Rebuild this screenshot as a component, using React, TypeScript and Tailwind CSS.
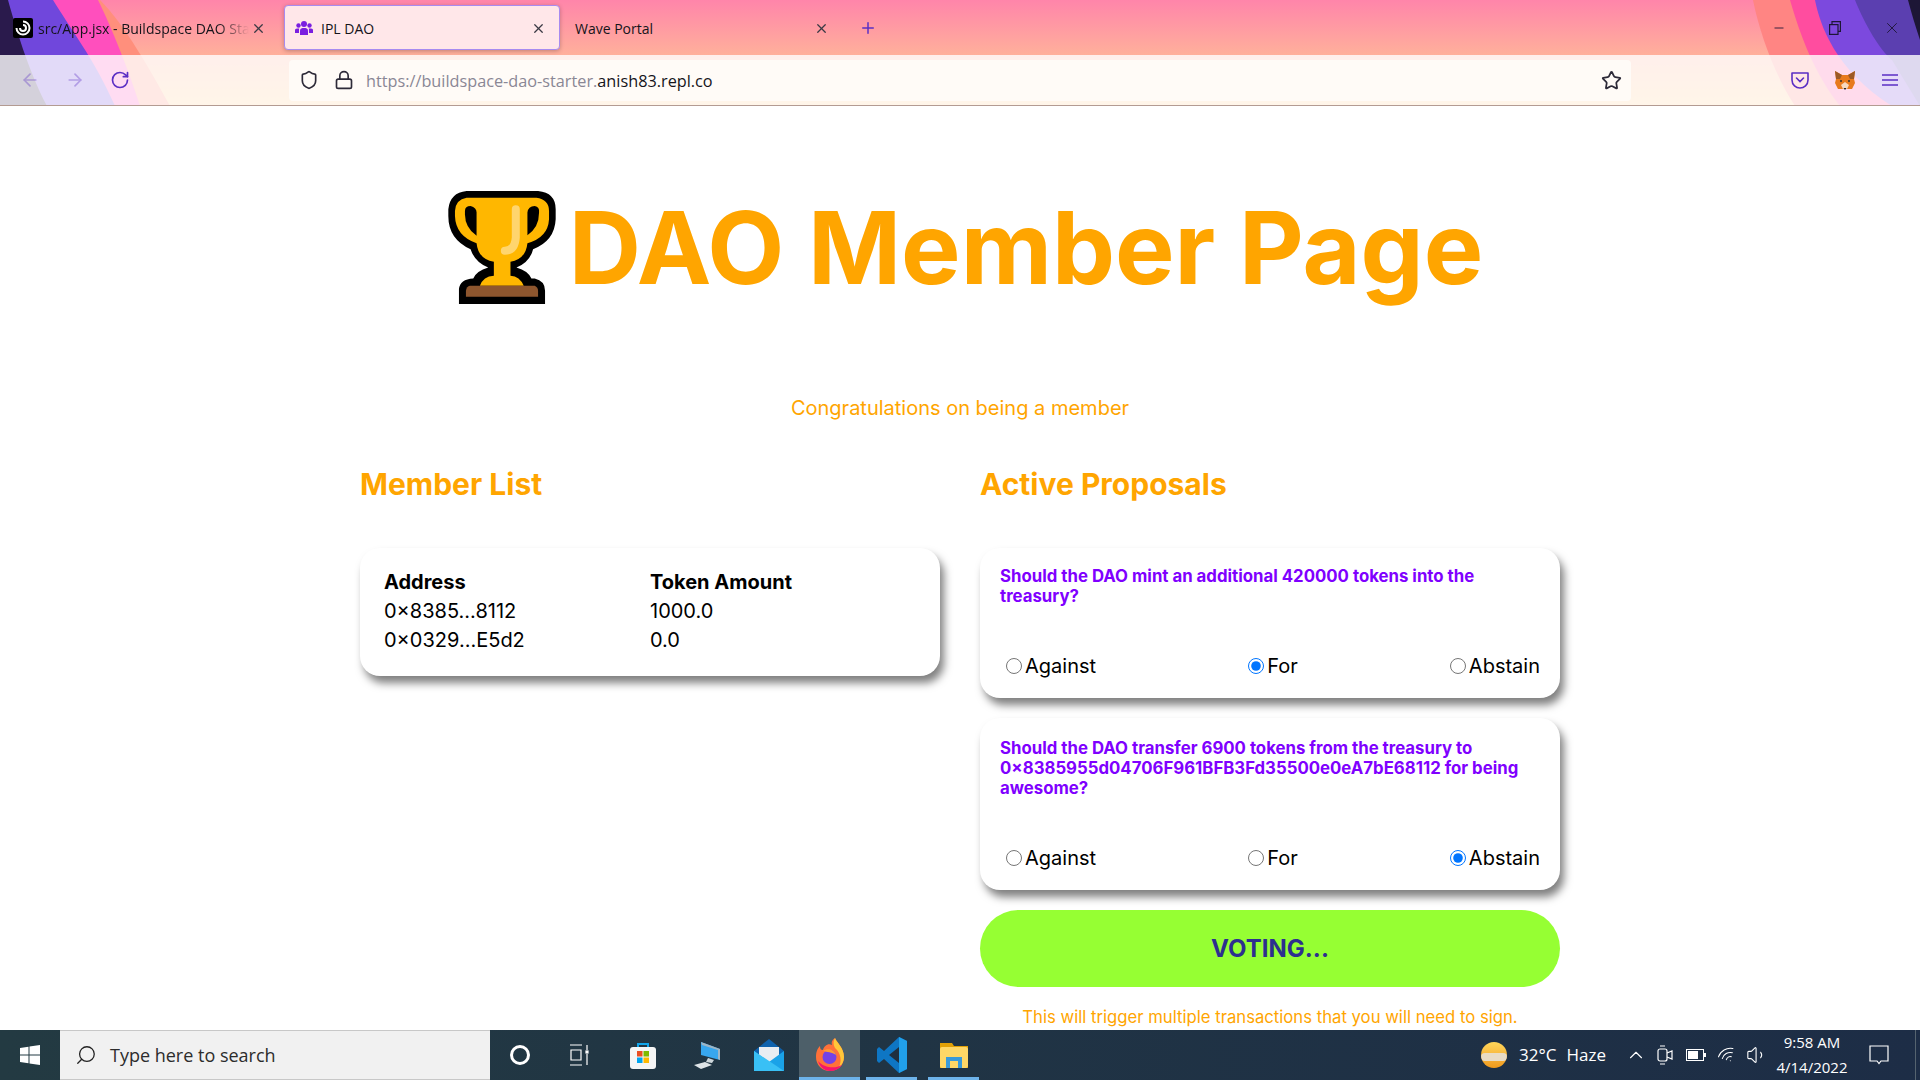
import { ArrowLeft, ArrowRight, RotateCw, Star, Plus, X, Minus, Lock, Shield, Search, ChevronUp, Wifi, Volume1 } from "lucide-react";

function ThemeArt() {
  return (
    <svg className="absolute inset-0 w-full h-full" viewBox="0 0 1920 106" preserveAspectRatio="none">
      <defs>
        <linearGradient id="bg" x1="0" y1="0" x2="0" y2="1">
          <stop offset="0" stopColor="#ff85aa" />
          <stop offset="0.52" stopColor="#ffb09b" />
          <stop offset="1" stopColor="#ffd08f" />
        </linearGradient>
      </defs>
      <rect width="1920" height="106" fill="url(#bg)" />
      <path d="M0 0H100C125 25 150 70 170 106H0Z" fill="#ff8f7c" />
      <path d="M0 0H98C108 20 125 60 140 106H0Z" fill="#ff4fbd" />
      <path d="M0 0H53C68 25 95 60 115 106H0Z" fill="#7047dc" />
      <path d="M0 0H8C15 25 28 70 47 106H0Z" fill="#2a1a4c" />
      <path d="M1920 0H1753C1760 35 1775 75 1795 106H1920Z" fill="#ff8583" />
      <path d="M1920 0H1790C1800 35 1815 75 1840 106H1920Z" fill="#ff4d9f" />
      <path d="M1920 0H1815C1820 25 1835 70 1892 106H1920Z" fill="#7c49de" />
      <path d="M1920 0H1855C1865 25 1880 50 1892 60L1920 106Z" fill="#5b3fb0" />
      <path d="M1920 0H1908C1912 15 1916 28 1920 40Z" fill="#1d1636" />
    </svg>
  );
}

function BrowserTabs() {
  return (
    <div className="relative flex h-[55px] items-center text-[14px] text-[#15141a] font-['Open_Sans',sans-serif]">
      <div className="flex h-[44px] w-[284px] items-center pl-[13px] pt-[1px]">
        <span className="flex h-[20px] w-[20px] shrink-0 items-center justify-center rounded-[2px] bg-black">
          <svg width="16" height="16" viewBox="0 0 16 16" fill="none" stroke="#fff" strokeWidth="2">
            <path d="M8 1.5A6.5 6.5 0 1 1 1.5 8" />
            <path d="M8 5A3 3 0 1 1 5 8" />
          </svg>
        </span>
        <span className="ml-[5px] w-[211px] overflow-hidden whitespace-nowrap [mask-image:linear-gradient(to_right,black_85%,transparent)]">src/App.jsx - Buildspace DAO Starter</span>
        <X className="ml-[2px] h-[15px] w-[15px] text-[#3a3944]" />
      </div>
      <div className="flex h-[45px] w-[276px] items-center rounded-[4px] border border-[#a78bf0] bg-[#ffe7e9] pl-[10px] pr-[13px] pt-[1px] shadow-[0_1px_4px_rgba(0,0,0,0.25)]">
        <svg width="18" height="16" viewBox="0 0 18 16" fill="#7a1fe0">
          <circle cx="9" cy="4" r="3" />
          <circle cx="3.5" cy="5.5" r="2.2" />
          <circle cx="14.5" cy="5.5" r="2.2" />
          <path d="M5 15V10.5C5 8.5 7 8 9 8C11 8 13 8.5 13 10.5V15Z" />
          <path d="M0 13V10C0 8.8 1.5 8.5 3.5 8.5C4 8.5 4.2 8.6 4.2 8.6C4 9.2 4 10 4 13Z" />
          <path d="M18 13V10C18 8.8 16.5 8.5 14.5 8.5C14 8.5 13.8 8.6 13.8 8.6C14 9.2 14 10 14 13Z" />
        </svg>
        <span className="ml-[8px] flex-1">IPL DAO</span>
        <X className="h-[15px] w-[15px] text-[#3a3944]" />
      </div>
      <div className="flex h-[44px] w-[274px] items-center pl-[15px] pr-[5px] pt-[1px]">
        <span className="flex-1">Wave Portal</span>
        <X className="h-[15px] w-[15px] text-[#3a3944]" />
      </div>
      <Plus className="ml-[25px] h-[18px] w-[18px] text-[#5b2fc4]" />
      <div className="ml-auto flex h-full items-center text-[#1d1636]">
        <span className="flex w-[56px] justify-center"><Minus className="h-[14px] w-[14px]" strokeWidth={1.5} /></span>
        <span className="flex w-[56px] justify-center">
          <svg width="12" height="14" viewBox="0 0 12 14" fill="none" stroke="currentColor" strokeWidth="1.2">
            <rect x="0.6" y="3.6" width="8.4" height="9.8" />
            <path d="M3 3.6V0.6H11.4V10.4H9" />
          </svg>
        </span>
        <span className="flex w-[57px] justify-center"><X className="h-[18px] w-[18px]" strokeWidth={1.2} /></span>
      </div>
    </div>
  );
}

function FoxIcon() {
  return (
    <svg width="22" height="21" viewBox="0 0 22 21">
      <path d="M1 1L8 5H14L21 1L20 9L21 13L18 19H4L1 13L2 9Z" fill="#e87a1c" />
      <path d="M1 1L8 5L6 9L2 9Z M21 1L14 5L16 9L20 9Z" fill="#9c5a26" />
      <path d="M7 15L11 12L15 15L13 19H9Z" fill="#f6d9c0" />
      <path d="M9.5 18H12.5L11 20Z" fill="#222" />
      <circle cx="7" cy="11" r="1" fill="#333" />
      <circle cx="15" cy="11" r="1" fill="#333" />
    </svg>
  );
}

function BrowserToolbar() {
  return (
    <div className="relative flex h-[51px] items-center border-b border-[#b39b92] bg-white/80 font-['Open_Sans',sans-serif]">
      <div className="flex w-[289px] items-center pl-[20px] text-[#5b2fc4]">
        <ArrowLeft className="h-[20px] w-[20px] opacity-35" />
        <ArrowRight className="ml-[25px] h-[20px] w-[20px] opacity-35" />
        <RotateCw className="ml-[25px] h-[20px] w-[20px]" />
      </div>
      <div className="flex h-[41px] w-[1342px] items-center rounded-[4px] bg-[#fffbf7] pl-[10px] pr-[9px]">
        <Shield className="h-[20px] w-[20px] text-[#2d2a38]" />
        <Lock className="ml-[15px] h-[20px] w-[20px] text-[#2d2a38]" />
        <span className="ml-[12px] pt-[2px] text-[16.25px] text-[#8a8795]">
          https://buildspace-dao-starter.<span className="text-[#15141a]">anish83.repl.co</span>
        </span>
        <Star className="ml-auto h-[21px] w-[21px] text-[#2d2a38]" />
      </div>
      <div className="ml-auto flex items-center pr-[22px] text-[#5b2fc4]">
        <svg width="20" height="20" viewBox="0 0 20 20" fill="none" stroke="currentColor" strokeWidth="1.6">
          <path d="M2 3H18V10C18 15 14 18 10 18C6 18 2 15 2 10Z" strokeLinejoin="round" />
          <path d="M6.5 8L10 11.5L13.5 8" strokeLinecap="round" />
        </svg>
        <span className="ml-[24px]"><FoxIcon /></span>
        <svg className="ml-[26px]" width="16" height="14" viewBox="0 0 16 14" stroke="currentColor" strokeWidth="1.6">
          <path d="M0 2H16M0 7H16M0 12H16" />
        </svg>
      </div>
    </div>
  );
}

function Trophy() {
  return (
    <svg className="shrink-0" width="108" height="113" viewBox="85 65 323 340">
      <path d="M140 65H355Q408 70 408 120V150Q405 215 340 240Q330 280 290 295Q325 305 335 328H345Q376 335 376 365V405H117V360Q120 330 160 328Q170 305 205 295Q165 280 152 240Q85 210 85 140V120Q90 70 140 65Z" fill="#000" />
      <path d="M140 85H350Q388 90 388 125V150Q385 205 323 222Q318 270 272 278V320Q300 322 312 350H180Q190 322 222 320V278Q175 270 170 222Q107 200 105 140V125Q107 90 140 85Z" fill="#ffb700" />
      <path d="M135 125Q135 110 152 110Q170 115 170 130V200Q135 175 135 135Z" fill="#000" />
      <path d="M323 130Q325 110 345 110Q360 112 358 130Q358 175 323 198Z" fill="#000" />
      <path d="M288 120V205Q285 245 255 245" fill="none" stroke="#ffd56e" strokeWidth="24" strokeLinecap="round" />
      <path d="M150 350H345Q355 355 355 365V383H138V365Q140 352 150 350Z" fill="#8e562e" />
    </svg>
  );
}

function VoteRow({ picked }: { picked: string }) {
  return (
    <div className="flex items-center justify-between pl-[23px] pr-[20px] text-[20px] text-black">
      {["Against", "For", "Abstain"].map((option) => (
        <label key={option} className="flex items-center">
          <input type="radio" readOnly checked={picked === option} className="m-[3px] h-[16px] w-[16px]" />
          <span>{option}</span>
        </label>
      ))}
    </div>
  );
}

const cardClass = "rounded-[20px] bg-white shadow-[4px_7px_8px_rgba(0,0,0,0.5)]";

function MemberPage() {
  return (
    <main className="h-[924px] overflow-hidden bg-white font-['Inter',sans-serif]">
      <h1 className="mt-[85px] flex items-center justify-center pl-[11px] text-[100px] font-bold leading-[113px] text-[#ffa500]">
        <Trophy />
        <span className="ml-[13px]">DAO Member Page</span>
      </h1>
      <p className="mt-[92px] text-center text-[20px] leading-[24px] text-[#ffa500]">Congratulations on being a member</p>
      <div className="mx-auto mt-[44px] grid w-[1200px] grid-cols-2 gap-x-[40px]">
        <div>
          <h2 className="text-[30px] font-bold leading-[40px] text-[#ffa500]">Member List</h2>
          <div className={`mt-[44px] h-[128px] px-[24px] pt-[19px] text-[20px] leading-[24px] text-black ${cardClass}`}>
            <table className="w-full table-fixed">
              <tbody>
                <tr className="h-[29px] font-bold"><td className="w-[266px]">Address</td><td>Token Amount</td></tr>
                <tr className="h-[29px]"><td>0×8385...8112</td><td>1000.0</td></tr>
                <tr className="h-[29px]"><td>0×0329...E5d2</td><td>0.0</td></tr>
              </tbody>
            </table>
          </div>
        </div>
        <div>
          <h2 className="text-[30px] font-bold leading-[40px] text-[#ffa500]">Active Proposals</h2>
          <div className={`mt-[44px] h-[150px] ${cardClass}`}>
            <p className="h-[103px] px-[20px] pt-[18px] text-[16.8px] font-bold leading-[20px] text-[#7f00ff]">
              Should the DAO mint an additional 420000 tokens into the treasury?
            </p>
            <VoteRow picked="For" />
          </div>
          <div className={`mt-[20px] h-[172px] ${cardClass}`}>
            <p className="h-[125px] px-[20px] pt-[20px] text-[16.8px] font-bold leading-[20px] text-[#7f00ff]">
              Should the DAO transfer 6900 tokens from the treasury to 0×8385955d04706F961BFB3Fd35500e0eA7bE68112 for being awesome?
            </p>
            <VoteRow picked="Abstain" />
          </div>
          <button className="mt-[20px] flex h-[77px] w-full items-center justify-center rounded-full bg-[#96ff33] text-[24px] font-bold text-[#2d2f8f]">
            VOTING...
          </button>
          <p className="mt-[20px] text-center text-[16.7px] leading-[20px] text-[#ffa500]">
            This will trigger multiple transactions that you will need to sign.
          </p>
        </div>
      </div>
    </main>
  );
}

function TaskSlot({ className, active, children }: { className: string; active?: boolean; children: React.ReactNode }) {
  return (
    <div className={`relative flex h-full items-center justify-center ${active ? "bg-[#4d5f69]" : ""} ${className}`}>
      {children}
    </div>
  );
}

function Underlined() {
  return <span className="absolute inset-x-0 bottom-0 h-[3px] bg-[#6db3ea]" />;
}

function Taskbar() {
  return (
    <footer className="flex h-[50px] items-center bg-gradient-to-r from-[#233a42] to-[#1d2d46] text-white font-['Open_Sans',sans-serif]">
      <div className="flex h-full w-[60px] items-center justify-center">
        <svg width="20" height="20" viewBox="0 0 20 20" fill="#fff">
          <path d="M0 3L8.5 1.8V9.4H0ZM9.5 1.6L20 0V9.4H9.5ZM0 10.4H8.5V18.2L0 17ZM9.5 10.4H20V20L9.5 18.4Z" />
        </svg>
      </div>
      <div className="flex h-full w-[430px] items-center border-y border-[#c8c8c8] bg-[#f1f1f1] pl-[15px] text-[18px] text-[#2c2c2c]">
        <Search className="h-[22px] w-[22px] -scale-x-100 text-[#222]" strokeWidth={1.4} />
        <span className="ml-[13px]">Type here to search</span>
      </div>
      <TaskSlot className="w-[60px]">
        <span className="h-[20px] w-[20px] rounded-full border-[3px] border-white" />
      </TaskSlot>
      <TaskSlot className="w-[60px]">
        <svg width="22" height="22" viewBox="0 0 22 22" fill="none" stroke="#fff" strokeWidth="1.2">
          <path d="M1 1H13M1 21H13M2 6H12V16H2ZM18 1V6M18 10V21" />
          <rect x="17" y="7" width="2" height="2" fill="#fff" />
        </svg>
      </TaskSlot>
      <TaskSlot className="w-[66px]">
        <svg width="30" height="30" viewBox="0 0 30 30">
          <path d="M10 8V4H20V8" fill="none" stroke="#12a5ea" strokeWidth="2" />
          <rect x="2" y="7" width="26" height="22" rx="3" fill="#f5f5f5" />
          <rect x="9" y="11" width="5.5" height="5.5" fill="#ea4f23" />
          <rect x="15.5" y="11" width="5.5" height="5.5" fill="#7fba00" />
          <rect x="9" y="17.5" width="5.5" height="5.5" fill="#00a4ef" />
          <rect x="15.5" y="17.5" width="5.5" height="5.5" fill="#ffb900" />
        </svg>
      </TaskSlot>
      <TaskSlot className="w-[62px]">
        <svg width="30" height="32" viewBox="0 0 30 32">
          <path d="M9 3L28 10V21L9 16Z" fill="#37a7ef" />
          <path d="M9 3L28 10L28 21L26 20V11L10 6Z" fill="#9fb5c4" />
          <path d="M16 19L22 21L20 24L14 23Z" fill="#cfd8dc" />
          <path d="M2 26L13 23L20 26L9 30Z" fill="#dfe5e8" />
        </svg>
      </TaskSlot>
      <TaskSlot className="w-[61px]">
        <svg width="30" height="34" viewBox="0 0 30 34">
          <path d="M0 13L15 1L30 13V33H0Z" fill="#0e62ad" />
          <path d="M5 9H25V20L15 25L5 20Z" fill="#e8edf2" />
          <path d="M0 13L15 24L30 13V33H0Z" fill="#1aa2e8" />
          <path d="M0 13L30 33H0Z" fill="#39c0f5" />
        </svg>
      </TaskSlot>
      <TaskSlot className="w-[61px]" active>
        <svg width="30" height="36" viewBox="0 0 30 36">
          <path d="M20 1C22 6 29 11 29 20C29 29 22 34 15 34C7 34 1 28 1 20C1 14 3 11 5 9C5 12 6 13 8 13C9 9 13 6 17 8C16 5 17 3 20 1Z" fill="#ff7139" />
          <path d="M20 1C22 6 29 11 29 20C29 24 27 28 24 30C27 24 26 16 20 11C18 8 18 4 20 1Z" fill="#ffc73a" />
          <path d="M3 24C5 31 11 34 15 34C20 34 24 32 27 28C20 32 9 31 3 24Z" fill="#f5156c" />
          <circle cx="14.5" cy="20" r="7" fill="#7542e5" />
          <path d="M8 14C12 11 19 12 21 18C17 15 12 15 8 14Z" fill="#ff9b32" />
        </svg>
        <Underlined />
      </TaskSlot>
      <TaskSlot className="ml-[6px] w-[51px]">
        <svg width="30" height="36" viewBox="0 0 30 36">
          <path d="M22 0L30 4V32L22 36L7 22L2 26L0 24V12L2 10L7 14Z" fill="#0e76c4" />
          <path d="M22 0L30 4V32L22 36Z" fill="#21a0ea" />
          <path d="M22 10L12 18L22 26Z" fill="#1f2f3f" />
        </svg>
        <Underlined />
      </TaskSlot>
      <TaskSlot className="ml-[11px] w-[51px]">
        <svg width="28" height="28" viewBox="0 0 28 28">
          <path d="M0 2H12L14 5H28V27H0Z" fill="#e1a006" />
          <rect y="6" width="28" height="21" rx="2" fill="#ffd766" />
          <path d="M6 27V16H22V27H18V20H10V27Z" fill="#3a9ad9" />
        </svg>
        <Underlined />
      </TaskSlot>
      <div className="ml-auto flex h-full items-center">
        <span className="relative h-[26px] w-[26px] overflow-hidden rounded-full bg-gradient-to-b from-[#ffd659] to-[#f09a1a]">
          <span className="absolute left-0 top-[11px] h-[8px] w-[26px] rounded-full bg-[#e9dcc5]" />
        </span>
        <span className="ml-[12px] text-[17px]">32°C</span>
        <span className="ml-[10px] text-[17px]">Haze</span>
        <ChevronUp className="ml-[19px] h-[22px] w-[22px]" strokeWidth={1.2} />
        <svg className="ml-[10px]" width="16" height="22" viewBox="0 0 16 22" fill="none" stroke="#fff" strokeWidth="1.2">
          <rect x="1" y="5" width="9" height="12" rx="2" />
          <path d="M10 9L15 7V15L10 13M3 2H8M3 20H8" />
        </svg>
        <svg className="ml-[13px]" width="20" height="12" viewBox="0 0 20 12">
          <rect x="0.5" y="0.5" width="17" height="11" fill="none" stroke="#fff" />
          <rect x="2" y="2" width="10" height="8" fill="#fff" />
          <rect x="18" y="4" width="2" height="4" fill="#fff" />
        </svg>
        <Wifi className="ml-[11px] h-[20px] w-[20px] rotate-[-30deg]" strokeWidth={1.2} />
        <Volume1 className="ml-[9px] h-[22px] w-[22px]" strokeWidth={1.2} />
        <div className="ml-[2px] w-[84px] text-center text-[15px] leading-[25px]">
          <div>9:58 AM</div>
          <div>4/14/2022</div>
        </div>
        <svg className="ml-[15px]" width="20" height="20" viewBox="0 0 20 20" fill="none" stroke="#fff" strokeWidth="1.2">
          <path d="M1 1H19V16H12L10 18.5L8 16H1Z" />
        </svg>
        <span className="ml-[26px] h-full w-[5px] border-l border-[#55636f]" />
      </div>
    </footer>
  );
}

export default function App() {
  return (
    <div className="h-[1080px] w-[1920px] overflow-hidden">
      <header className="relative">
        <ThemeArt />
        <BrowserTabs />
        <BrowserToolbar />
      </header>
      <MemberPage />
      <Taskbar />
    </div>
  );
}
